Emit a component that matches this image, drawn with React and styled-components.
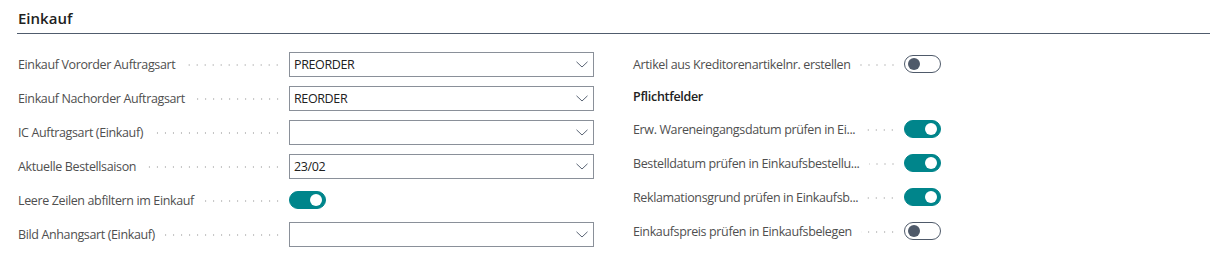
import styled, { createGlobalStyle } from "styled-components";

const GlobalStyle = createGlobalStyle`
  html, body {
    margin: 0;
    padding: 0;
    background: #ffffff;
  }
  body {
    font-family: "Open Sans", "Noto Sans", Arial, sans-serif;
    color: #212121;
  }
`;

const Page = styled.div`
  box-sizing: border-box;
  width: 1218px;
  padding: 0 8px 0 17px;
`;

const Header = styled.div`
  padding: 8px 0 5px 1px;
  border-bottom: 1px solid #505c6d;
  font-size: 15px;
  line-height: 20px;
  font-weight: 600;
  color: #212121;
`;

const Columns = styled.div`
  margin-top: 13px;
  display: grid;
  grid-template-columns: 577px 1fr;
  column-gap: 38px;
`;

const Column = styled.div`
  display: flex;
  flex-direction: column;
`;

const Row = styled.div`
  height: 34px;
  display: flex;
  align-items: center;
  gap: 10px;
`;

const Label = styled.div`
  box-sizing: border-box;
  width: 262px;
  flex: none;
  display: flex;
  align-items: center;
  padding-left: 1px;
  font-size: 12.5px;
  letter-spacing: -0.37px;
  color: #4f4f4f;
  white-space: nowrap;

  span {
    flex: none;
  }
`;

const Leader = styled.i`
  flex: 1;
  height: 2px;
  margin: 2px 0 0 9px;
  background-image: radial-gradient(circle at 6.5px 1px, #c2c2c2 0.8px, transparent 1.1px);
  background-size: 8px 2px;
  background-repeat: repeat-x;
  background-position: right center;
`;

const Select = styled.div`
  box-sizing: border-box;
  width: 305px;
  height: 25px;
  border: 1px solid #8a9099;
  display: flex;
  align-items: center;
  justify-content: space-between;
  padding: 0 5px 0 4px;
  font-size: 12.5px;
  letter-spacing: -0.37px;
  color: #212121;
`;

const Toggle = styled.div`
  box-sizing: border-box;
  width: 37px;
  height: 18px;
  border-radius: 9px;
  display: flex;
  align-items: center;
  justify-content: ${(p) => (p.on ? "flex-end" : "flex-start")};
  padding: 0 3px;
  background: ${(p) => (p.on ? "#00858b" : "#ffffff")};
  border: 1px solid ${(p) => (p.on ? "#00858b" : "#4f5a6a")};

  &::after {
    content: "";
    width: 12px;
    height: 12px;
    border-radius: 50%;
    background: ${(p) => (p.on ? "#ffffff" : "#4f5a6a")};
  }
`;

const GroupTitle = styled.div`
  height: 31px;
  display: flex;
  align-items: center;
  padding-left: 1px;
  font-size: 12.5px;
  letter-spacing: -0.3px;
  font-weight: 600;
  color: #212121;
`;

const Chevron = () => (
  <svg width="12" height="7" viewBox="0 0 12 7">
    <path d="M0.5 0.8 L6 6 L11.5 0.8" fill="none" stroke="#5b6575" strokeWidth="1" />
  </svg>
);

const Field = ({ label, children }) => (
  <Row>
    <Label>
      <span>{label}</span>
      <Leader />
    </Label>
    {children}
  </Row>
);

const leftFields = [
  { label: "Einkauf Vororder Auftragsart", value: "PREORDER" },
  { label: "Einkauf Nachorder Auftragsart", value: "REORDER" },
  { label: "IC Auftragsart (Einkauf)", value: "" },
  { label: "Aktuelle Bestellsaison", value: "23/02" },
  { label: "Leere Zeilen abfiltern im Einkauf", toggle: true, on: true },
  { label: "Bild Anhangsart (Einkauf)", value: "" },
];

const requiredFields = [
  { label: "Erw. Wareneingangsdatum prüfen in Ei...", on: true },
  { label: "Bestelldatum prüfen in Einkaufsbestellu...", on: true },
  { label: "Reklamationsgrund prüfen in Einkaufsb...", on: true },
  { label: "Einkaufspreis prüfen in Einkaufsbelegen", on: false },
];

export default function App() {
  return (
    <Page>
      <GlobalStyle />
      <Header>Einkauf</Header>
      <Columns>
        <Column>
          {leftFields.map((f) => (
            <Field key={f.label} label={f.label}>
              {f.toggle ? (
                <Toggle on={f.on} />
              ) : (
                <Select>
                  <span>{f.value}</span>
                  <Chevron />
                </Select>
              )}
            </Field>
          ))}
        </Column>
        <Column>
          <Field label="Artikel aus Kreditorenartikelnr. erstellen">
            <Toggle on={false} />
          </Field>
          <GroupTitle>Pflichtfelder</GroupTitle>
          {requiredFields.map((f) => (
            <Field key={f.label} label={f.label}>
              <Toggle on={f.on} />
            </Field>
          ))}
        </Column>
      </Columns>
    </Page>
  );
}
